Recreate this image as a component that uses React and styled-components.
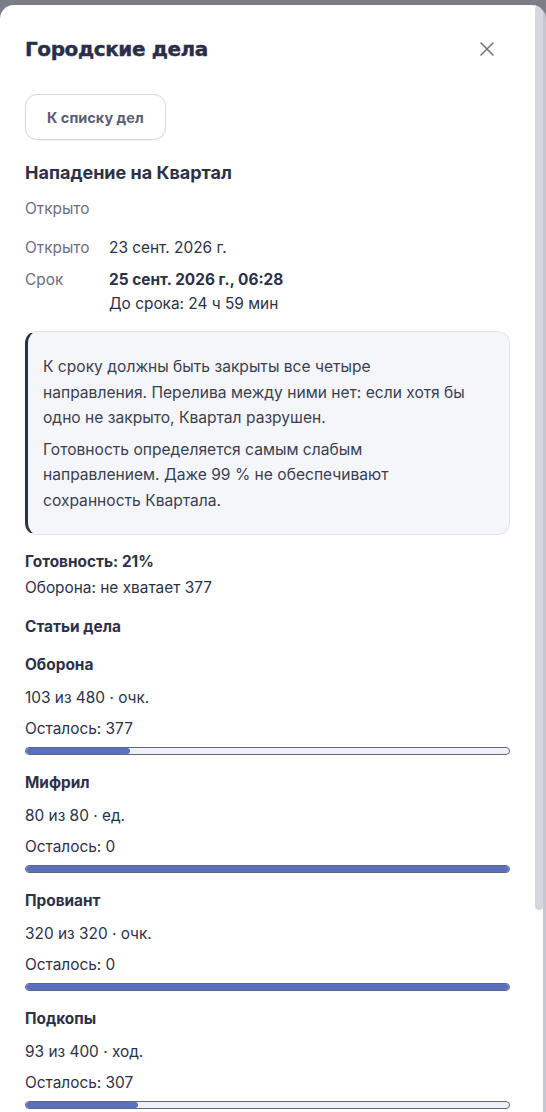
import React from 'react';
import styled, { createGlobalStyle } from 'styled-components';

const ink = '#2d3148';
const muted = '#6b6e7d';

const GlobalStyle = createGlobalStyle`
  html, body {
    margin: 0;
    height: 100%;
  }

  body {
    background: #7c7e87;
    font-family: Inter, "Noto Sans", sans-serif;
    color: ${ink};
    overflow: hidden;
  }

  p {
    margin: 0;
  }
`;

const Page = styled.div`
  padding-top: 5px;
`;

const Modal = styled.div`
  width: 546px;
  height: 1107px;
  box-sizing: border-box;
  display: flex;
  background: #fff;
  border-right: 3px solid #c6c7cf;
  border-radius: 14px 14px 0 0;
  overflow: hidden;
`;

const Content = styled.div`
  width: 535px;
  flex: none;
  box-sizing: border-box;
  padding: 30px 25px 0;
`;

// the scrollbar of the dialog body
const ScrollRail = styled.div`
  width: 8px;
  flex: none;
  background: #fff;
`;

const ScrollThumb = styled.div`
  height: 905px;
  background: #d5d6de;
  border-radius: 4px;
`;

const Header = styled.header`
  display: flex;
  align-items: center;
  justify-content: space-between;
  height: 28px;
`;

const Title = styled.h1`
  margin: 0;
  font-family: "DejaVu Sans", Inter, sans-serif;
  font-size: 20px;
  font-weight: 700;
  line-height: 28px;
  letter-spacing: -0.4px;
  color: #2a2e47;
  -webkit-text-stroke: 0.4px currentColor;
`;

const CloseButton = styled.button`
  width: 24px;
  height: 24px;
  margin-right: 11px;
  padding: 0;
  display: flex;
  align-items: center;
  justify-content: center;
  background: none;
  border: none;
  color: #6c6e7f;
  cursor: pointer;
`;

const BackButton = styled.button`
  display: block;
  margin-top: 31px;
  height: 46px;
  padding: 0 21px;
  background: #fff;
  border: 1px solid #d6d8df;
  border-radius: 12px;
  font-family: Inter, sans-serif;
  font-size: 14.5px;
  font-weight: 700;
  color: #5b5f74;
  box-shadow: 0 1px 2px rgba(40, 44, 70, 0.04);
`;

const CaseTitle = styled.h2`
  margin: 21px 0 0;
  font-size: 18px;
  font-weight: 700;
  line-height: 24px;
  color: ${ink};
`;

const Status = styled.p`
  margin-top: 13px !important;
  font-size: 15.4px;
  line-height: 22px;
  color: ${muted};
`;

const Facts = styled.dl`
  margin: 16px 0 0;
  display: grid;
  grid-template-columns: 84px 1fr;
  row-gap: 8px;
  font-size: 15.4px;
  line-height: 24px;
`;

const FactLabel = styled.dt`
  color: ${muted};
`;

const FactValue = styled.dd`
  margin: 0;
  color: ${ink};
  font-weight: ${({ $strong }) => ($strong ? 700 : 400)};

  small {
    display: block;
    font-size: 15.4px;
    font-weight: 400;
  }
`;

const InfoBox = styled.div`
  margin-top: 15px;
  padding: 22px 20px 21px 15px;
  background: #f5f6fa;
  border: 1px solid #e2e4eb;
  border-left: 3px solid #2e3247;
  border-radius: 12px;

  p {
    font-size: 15.6px;
    line-height: 25.5px;
    color: #3b3e50;
  }

  p + p {
    margin-top: 6px;
  }
`;

const Summary = styled.div`
  margin-top: 16px;
  font-size: 15.4px;
  line-height: 22px;
`;

const Readiness = styled.p`
  font-weight: 700;
`;

const Shortage = styled.p`
  margin-top: 4px !important;
  color: ${ink};
`;

const SectionTitle = styled.h3`
  margin: 17px 0 0;
  font-size: 15.4px;
  font-weight: 700;
  line-height: 22px;
`;

const ItemList = styled.div`
  margin-top: 16px;
`;

const Item = styled.section`
  font-size: 15.4px;
  line-height: 22px;

  & + & {
    margin-top: 17px;
  }
`;

const ItemName = styled.h4`
  margin: 0;
  font-size: 15.4px;
  font-weight: 700;
  line-height: 22px;
`;

const ItemMeta = styled.p`
  margin-top: ${({ $gap }) => $gap}px !important;
  color: ${ink};
`;

const Bar = styled.div`
  margin-top: 7px;
  height: 8px;
  box-sizing: border-box;
  background: #eef0f7;
  border: 1px solid #63677d;
  border-radius: 4px;
  overflow: hidden;
`;

const BarFill = styled.div`
  height: 100%;
  background: #5870bf;
  border-radius: 3px;
`;

const items = [
  { name: 'Оборона', done: 103, total: 480, unit: 'очк.' },
  { name: 'Мифрил', done: 80, total: 80, unit: 'ед.' },
  { name: 'Провиант', done: 320, total: 320, unit: 'очк.' },
  { name: 'Подкопы', done: 93, total: 400, unit: 'ход.' },
];

const CloseIcon = () => (
  <svg width="24" height="24" viewBox="0 0 24 24" fill="none" stroke="currentColor" strokeWidth="1.5" strokeLinecap="round">
    <path d="M18 6 6 18M6 6l12 12" />
  </svg>
);

export default function App() {
  return (
    <>
      <GlobalStyle />
      <Page>
        <Modal>
          <Content>
            <Header>
              <Title>Городские дела</Title>
              <CloseButton aria-label="Закрыть">
                <CloseIcon />
              </CloseButton>
            </Header>

            <BackButton>К списку дел</BackButton>

            <CaseTitle>Нападение на Квартал</CaseTitle>
            <Status>Открыто</Status>

            <Facts>
              <FactLabel>Открыто</FactLabel>
              <FactValue>23 сент. 2026 г.</FactValue>
              <FactLabel>Срок</FactLabel>
              <FactValue $strong>
                25 сент. 2026 г., 06:28
                <small>До срока: 24 ч 59 мин</small>
              </FactValue>
            </Facts>

            <InfoBox>
              <p>
                К сроку должны быть закрыты все четыре
                <br />
                направления. Перелива между ними нет: если хотя бы
                <br />
                одно не закрыто, Квартал разрушен.
              </p>
              <p>
                Готовность определяется самым слабым
                <br />
                направлением. Даже 99 % не обеспечивают
                <br />
                сохранность Квартала.
              </p>
            </InfoBox>

            <Summary>
              <Readiness>Готовность: 21%</Readiness>
              <Shortage>Оборона: не хватает 377</Shortage>
            </Summary>

            <SectionTitle>Статьи дела</SectionTitle>

            <ItemList>
              {items.map((item) => (
                <Item key={item.name}>
                  <ItemName>{item.name}</ItemName>
                  <ItemMeta $gap={11}>
                    {item.done} из {item.total} · {item.unit}
                  </ItemMeta>
                  <ItemMeta $gap={9}>Осталось: {item.total - item.done}</ItemMeta>
                  <Bar>
                    <BarFill style={{ width: `${(item.done / item.total) * 100}%` }} />
                  </Bar>
                </Item>
              ))}
            </ItemList>
          </Content>
          <ScrollRail>
            <ScrollThumb />
          </ScrollRail>
        </Modal>
      </Page>
    </>
  );
}
